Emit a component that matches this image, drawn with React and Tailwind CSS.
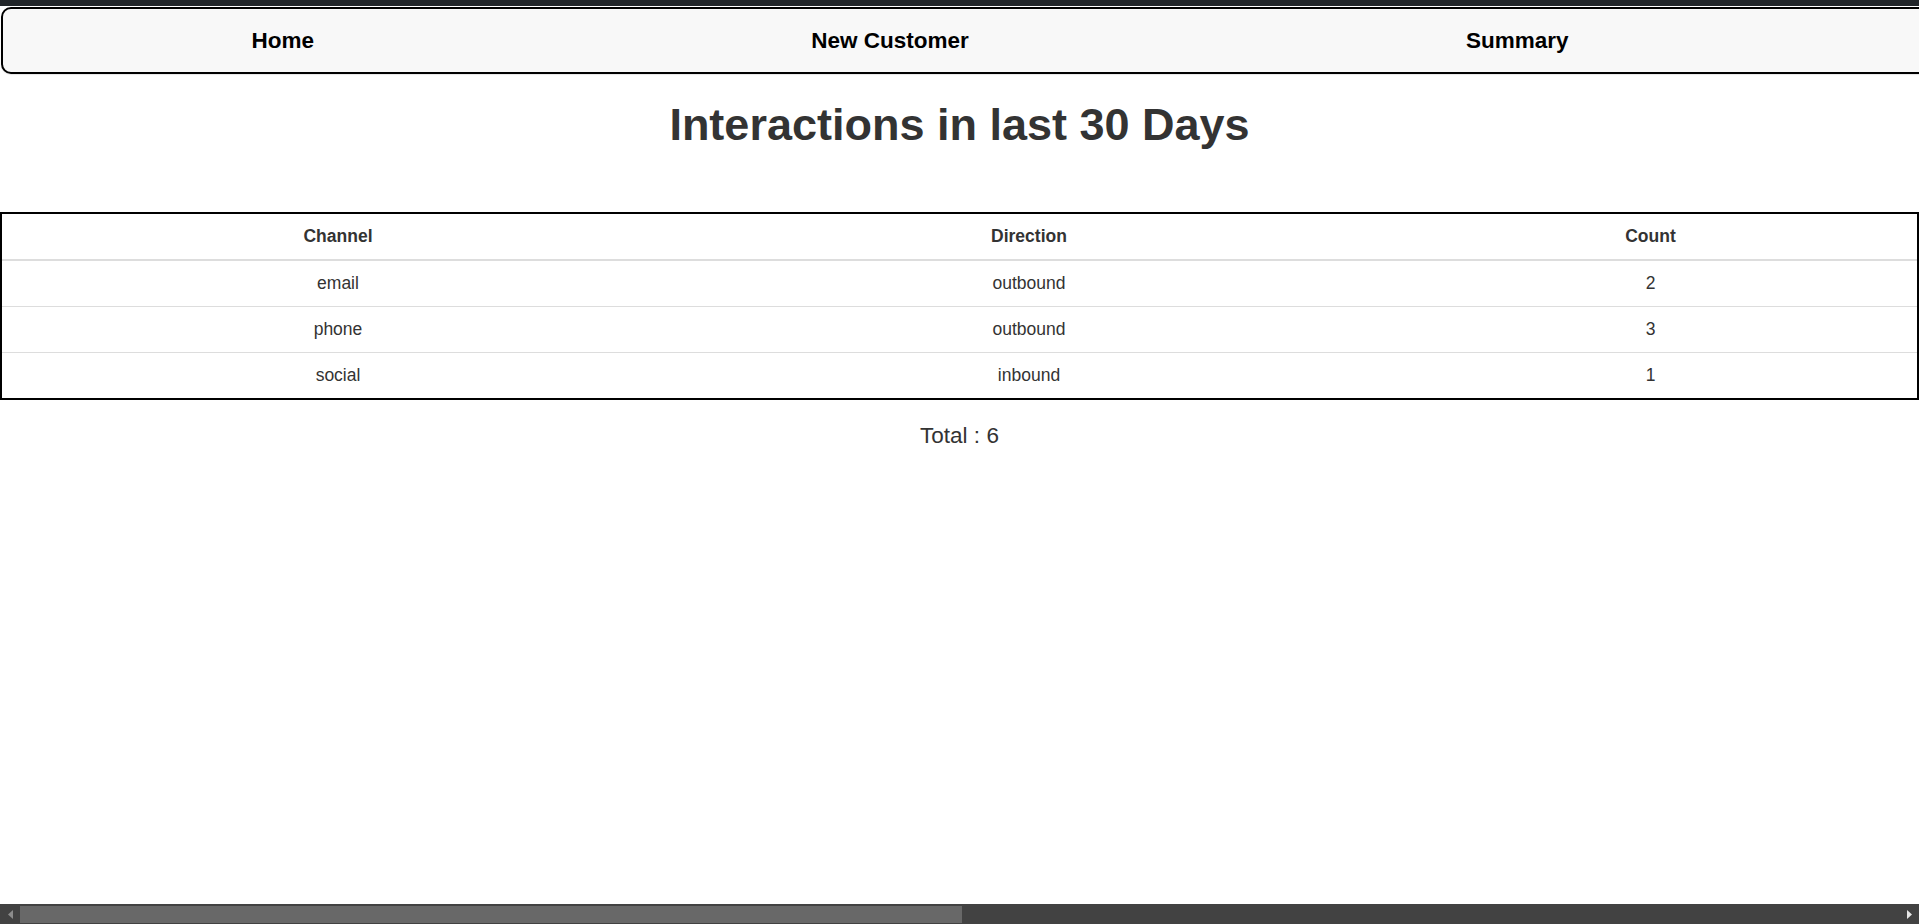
import React from 'react';

const navLinks = ['Home', 'New Customer', 'Summary'];

const interactions = [
    { channel: 'email', direction: 'outbound', count: 2 },
    { channel: 'phone', direction: 'outbound', count: 3 },
    { channel: 'social', direction: 'inbound', count: 1 },
];

// fake browser scrollbar, the page in the shot is wider than the window
const ScrollBar = () => (
    <div className="flex h-[20px] shrink-0 bg-[#424242]">
        <div className="flex w-[20px] items-center justify-center">
            <svg width="5" height="9" viewBox="0 0 5 9">
                <polygon points="5,0 0,4.5 5,9" fill="#8c8c8c" />
            </svg>
        </div>
        <div className="flex-1 pt-[2px] pb-[1px]">
            <div className="h-full w-[942px] bg-[#686868]" />
        </div>
        <div className="flex w-[20px] items-center justify-center">
            <svg width="5" height="9" viewBox="0 0 5 9">
                <polygon points="0,0 5,4.5 0,9" fill="#e6e6e6" />
            </svg>
        </div>
    </div>
);

const App = () => {
    const total = interactions.reduce((sum, i) => sum + i.count, 0);

    return (
        <div className="flex h-screen w-screen flex-col overflow-hidden bg-white font-['Liberation_Sans',Arial,sans-serif] text-[#333]">
            <div className="h-[6px] shrink-0 bg-[#212529]" />

            <div className="flex-1 overflow-hidden pt-[1px]">
                <nav className="ml-[1px] h-[67px] w-[3840px] rounded-[10px] border-2 border-black bg-[#f8f8f8] shadow-[0_1px_1px_rgba(0,0,0,0.1)]">
                    <ul className="flex h-full w-[1814px] items-center justify-around pt-[1px]">
                        {navLinks.map((link) => (
                            <li key={link}>
                                <a href="#" className="text-[22.5px] font-bold leading-[32px] text-black">
                                    {link}
                                </a>
                            </li>
                        ))}
                    </ul>
                </nav>

                <h1 className="mt-[26px] mb-[62.5px] text-center text-[45px] font-bold leading-[49.5px] text-[#333]">
                    Interactions in last 30 Days
                </h1>

                <table className="w-full border-separate border-spacing-0 border-2 border-black text-center text-[17.5px] leading-[25px]">
                    <thead>
                        <tr>
                            <th className="w-[672px] border-b-2 border-[#ddd] px-[10px] py-[10px] font-bold">Channel</th>
                            <th className="w-[710px] border-b-2 border-[#ddd] px-[10px] py-[10px] font-bold">Direction</th>
                            <th className="border-b-2 border-[#ddd] px-[10px] py-[10px] font-bold">Count</th>
                        </tr>
                    </thead>
                    <tbody>
                        {interactions.map((row, index) => (
                            <tr key={row.channel}>
                                <td className={index > 0 ? 'border-t border-[#ddd] px-[10px] py-[10px]' : 'px-[10px] py-[10px]'}>{row.channel}</td>
                                <td className={index > 0 ? 'border-t border-[#ddd] px-[10px] py-[10px]' : 'px-[10px] py-[10px]'}>{row.direction}</td>
                                <td className={index > 0 ? 'border-t border-[#ddd] px-[10px] py-[10px]' : 'px-[10px] py-[10px]'}>{row.count}</td>
                            </tr>
                        ))}
                    </tbody>
                </table>

                <p className="mt-[20px] text-center text-[22.5px] leading-[32px]">Total : {total}</p>
            </div>

            <ScrollBar />
        </div>
    );
};

export default App;
